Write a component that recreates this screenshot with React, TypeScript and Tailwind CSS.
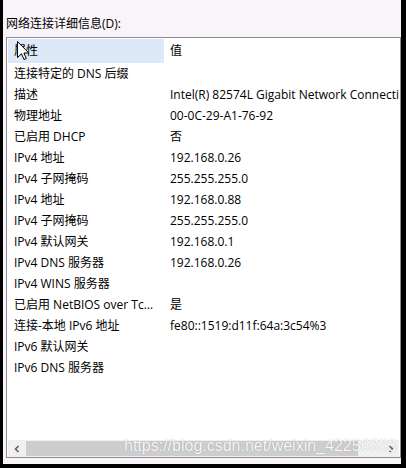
const rows: [string, string][] = [
  ["连接特定的 DNS 后缀", ""],
  ["描述", "Intel(R) 82574L Gigabit Network Connection"],
  ["物理地址", "00-0C-29-A1-76-92"],
  ["已启用 DHCP", "否"],
  ["IPv4 地址", "192.168.0.26"],
  ["IPv4 子网掩码", "255.255.255.0"],
  ["IPv4 地址", "192.168.0.88"],
  ["IPv4 子网掩码", "255.255.255.0"],
  ["IPv4 默认网关", "192.168.0.1"],
  ["IPv4 DNS 服务器", "192.168.0.26"],
  ["IPv4 WINS 服务器", ""],
  ["已启用 NetBIOS over Tcpip", "是"],
  ["连接-本地 IPv6 地址", "fe80::1519:d11f:64a:3c54%3"],
  ["IPv6 默认网关", ""],
  ["IPv6 DNS 服务器", ""],
];

function Cursor() {
  return (
    <svg
      className="absolute left-[17px] top-[41px]"
      width="13"
      height="20"
      viewBox="0 0 13 20"
    >
      <path
        d="M0.5 0.5 L0.5 16.5 L4.5 12.8 L7 18.5 L9.3 17.5 L6.9 12 L11.8 12 Z"
        fill="#fff"
        stroke="#000"
        strokeWidth="1"
        strokeLinejoin="miter"
      />
    </svg>
  );
}

export default function App() {
  return (
    <div className="relative w-[406px] h-[468px] bg-black pl-[3px] pr-[5px] pb-[4px] text-[12px] text-black font-['Open_Sans','Noto_Sans_CJK_SC',sans-serif]">
      <div className="h-full bg-[#f9f4f8] flex flex-col pl-[3px] pt-[17px] pb-[6px]">
        <div className="h-[14px] leading-[14px]">网络连接详细信息(D):</div>
        <div className="mt-[6px] flex-1 border border-[#8f8c96] bg-white flex flex-col p-[1px] pb-0 overflow-hidden">
          <div className="flex-1 overflow-hidden">
            <div className="flex h-[24px] leading-[24px]">
              <div className="w-[156px] shrink-0 bg-[#dde8f8] pl-[6px]">属性</div>
              <div className="pl-[6px] whitespace-nowrap">值</div>
            </div>
            {rows.map(([name, value], i) => (
              <div key={i} className="flex h-[21px] leading-[21px]">
                <div className="w-[156px] shrink-0 pl-[6px] pr-[4px] truncate">{name}</div>
                <div className="pl-[6px] whitespace-nowrap">{value}</div>
              </div>
            ))}
          </div>
          <div className="h-[17px] flex bg-[#f0f0f0]">
            <div className="w-[17px] flex items-center justify-center">
              <svg width="8" height="8" viewBox="0 0 8 8">
                <path d="M5.5 1 L2.5 4 L5.5 7" fill="none" stroke="#606060" strokeWidth="1.6" />
              </svg>
            </div>
            <div className="flex-1 py-[1px] pl-[1px]">
              <div className="w-[332px] h-full bg-[#cdcdcd]" />
            </div>
            <div className="w-[17px] flex items-center justify-center">
              <svg width="8" height="8" viewBox="0 0 8 8">
                <path d="M2.5 1 L5.5 4 L2.5 7" fill="none" stroke="#606060" strokeWidth="1.6" />
              </svg>
            </div>
          </div>
        </div>
      </div>
      <div className="absolute left-[124px] top-[436px] font-['Liberation_Sans',sans-serif] text-[16px] leading-[20px] text-white/95 [text-shadow:0_0_1px_rgba(0,0,0,0.3)] whitespace-nowrap pointer-events-none">
        https://blog.csdn.net/weixin_42256333
      </div>
      <Cursor />
    </div>
  );
}
